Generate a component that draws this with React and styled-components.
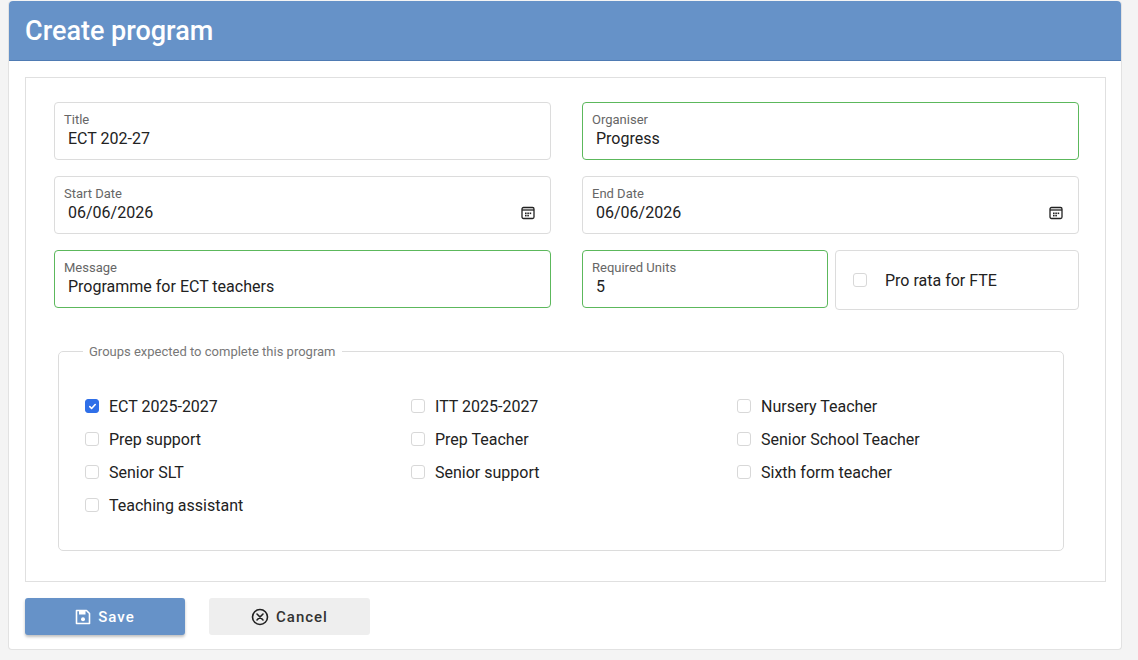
import React from "react";
import styled, { createGlobalStyle } from "styled-components";

const Global = createGlobalStyle`
  body { margin:0; background:#f4f4f4; font-family: Roboto, "Noto Sans", sans-serif; }
`;
const Card = styled.div`
  margin: 1px 16px 0 8px; height: 649px; box-sizing: border-box; background:#fff;
  border:1px solid #e2e2e2; border-top:none; border-radius: 4px; display:flex; flex-direction:column;
`;
const Header = styled.div`
  background:#6692c8; height:59px; border-bottom:1px solid #4f7bb3; border-radius:4px 4px 0 0;
  color:#fff; font-size:27px; font-weight:500; display:flex; align-items:center; padding-left:16px;
`;
const Body = styled.div`padding: 16px 15px 0 16px; display:flex; flex-direction:column;`;
const Inner = styled.div`
  border:1px solid #e0e0e0; height:505px; box-sizing:border-box; padding:24px 28px 0 28px;
`;
const Grid = styled.div`display:grid; grid-template-columns: 497px 497px; column-gap:31px; row-gap:16px;`;
const Split = styled.div`display:grid; grid-template-columns: 246px 244px; column-gap:7px;`;
const Field = styled.div`
  height:58px; box-sizing:border-box; border:1px solid ${p=>p.$green?"#5cb85c":"#dcdcdc"};
  border-radius:4px; padding:9px 12px 0 9px; position:relative;
`;
const Label = styled.div`font-size:13px; color:#666; line-height:16px;`;
const Value = styled.div`font-size:16px; color:#222; line-height:22px; padding-left:4px;`;
const Cal = styled.svg`position:absolute; right:15px; top:29px;`;
const Box = styled.span`
  width:14px; height:14px; border-radius:3px; box-sizing:border-box; flex:none;
  border:1px solid ${p=>p.$on?"#2f6fe8":"#d8d8d8"}; background:${p=>p.$on?"#2f6fe8":"#fff"};
  display:inline-flex; align-items:center; justify-content:center;
`;
const CheckField = styled(Field)`display:flex; align-items:center; padding:0 0 0 17px; gap:18px; font-size:16px; color:#222; height:60px;`;
const Fieldset = styled.fieldset`
  margin:34px 16px 0 4px; border:1px solid #dcdcdc; border-radius:5px; height:207px; box-sizing:border-box;
  padding:36px 26px 0 26px;
  legend { font-size:13px; color:#777; padding:0 6px; margin-left:-2px; }
`;
const Groups = styled.div`display:grid; grid-template-columns: 326px 326px 300px; row-gap:11px;`;
const Item = styled.label`display:flex; align-items:center; gap:10px; font-size:16px; color:#222; height:22px;`;
const Actions = styled.div`display:flex; gap:24px; margin-top:16px;`;
const Btn = styled.button`
  width:${p=>p.$w}px; height:37px; border:none; border-radius:3px; font-family:inherit; font-size:15px;
  font-weight:500; letter-spacing:1px; display:flex; align-items:center; justify-content:center; gap:7px;
  background:${p=>p.$primary?"#6692c8":"#eeeeee"}; color:${p=>p.$primary?"#fff":"#333"};
  box-shadow:${p=>p.$primary?"0 2px 3px rgba(0,0,0,.25)":"none"};
`;

const CalIcon = () => (
  <Cal width="14" height="14" viewBox="0 0 14 14" fill="none">
    <rect x="1" y="1.5" width="12" height="11" rx="1.5" stroke="#222" strokeWidth="1.3"/>
    <line x1="1" y1="4" x2="13" y2="4" stroke="#222" strokeWidth="1.3"/>
    <rect x="4" y="6.5" width="1.6" height="1.6" fill="#222"/><rect x="6.3" y="6.5" width="1.6" height="1.6" fill="#222"/><rect x="8.6" y="6.5" width="1.6" height="1.6" fill="#222"/>
    <rect x="4" y="8.8" width="1.6" height="1.6" fill="#222"/><rect x="6.3" y="8.8" width="1.6" height="1.6" fill="#222"/>
  </Cal>
);
const Check = ({on}) => (
  <Box $on={on}>{on && <svg width="9" height="9" viewBox="0 0 10 10"><path d="M2 5.2l2 2 4-4.4" stroke="#fff" strokeWidth="1.8" fill="none" strokeLinecap="round" strokeLinejoin="round"/></svg>}</Box>
);

const groups = ["ECT 2025-2027","ITT 2025-2027","Nursery Teacher","Prep support","Prep Teacher","Senior School Teacher","Senior SLT","Senior support","Sixth form teacher","Teaching assistant"];

export default function App() {
  return (
    <>
      <Global />
      <Card>
        <Header>Create program</Header>
        <Body>
          <Inner>
            <Grid>
              <Field><Label>Title</Label><Value>ECT 202-27</Value></Field>
              <Field $green><Label>Organiser</Label><Value>Progress</Value></Field>
              <Field><Label>Start Date</Label><Value>06/06/2026</Value><CalIcon/></Field>
              <Field><Label>End Date</Label><Value>06/06/2026</Value><CalIcon/></Field>
              <Field $green><Label>Message</Label><Value>Programme for ECT teachers</Value></Field>
              <Split>
                <Field $green><Label>Required Units</Label><Value>5</Value></Field>
                <CheckField><Check/>Pro rata for FTE</CheckField>
              </Split>
            </Grid>
            <Fieldset>
              <legend>Groups expected to complete this program</legend>
              <Groups>
                {groups.map((g,i)=>(<Item key={g}><Check on={i===0}/>{g}</Item>))}
              </Groups>
            </Fieldset>
          </Inner>
          <Actions>
            <Btn $primary $w={160}>
              <svg width="16" height="16" viewBox="0 0 16 16"><path d="M2 1.5h9.5L14.5 4.5V14.5H1.5V1.5z" fill="none" stroke="#fff" strokeWidth="1.6" strokeLinejoin="round"/><rect x="4" y="2" width="6.5" height="3.5" fill="#fff"/><circle cx="8" cy="10.3" r="2" fill="#fff"/></svg>
              Save
            </Btn>
            <Btn $w={161}>
              <svg width="18" height="18" viewBox="0 0 18 18"><circle cx="9" cy="9" r="7.5" fill="none" stroke="#222" strokeWidth="1.6"/><path d="M6 6l6 6M12 6l-6 6" stroke="#222" strokeWidth="1.6" strokeLinecap="round"/></svg>
              Cancel
            </Btn>
          </Actions>
        </Body>
      </Card>
    </>
  );
}
